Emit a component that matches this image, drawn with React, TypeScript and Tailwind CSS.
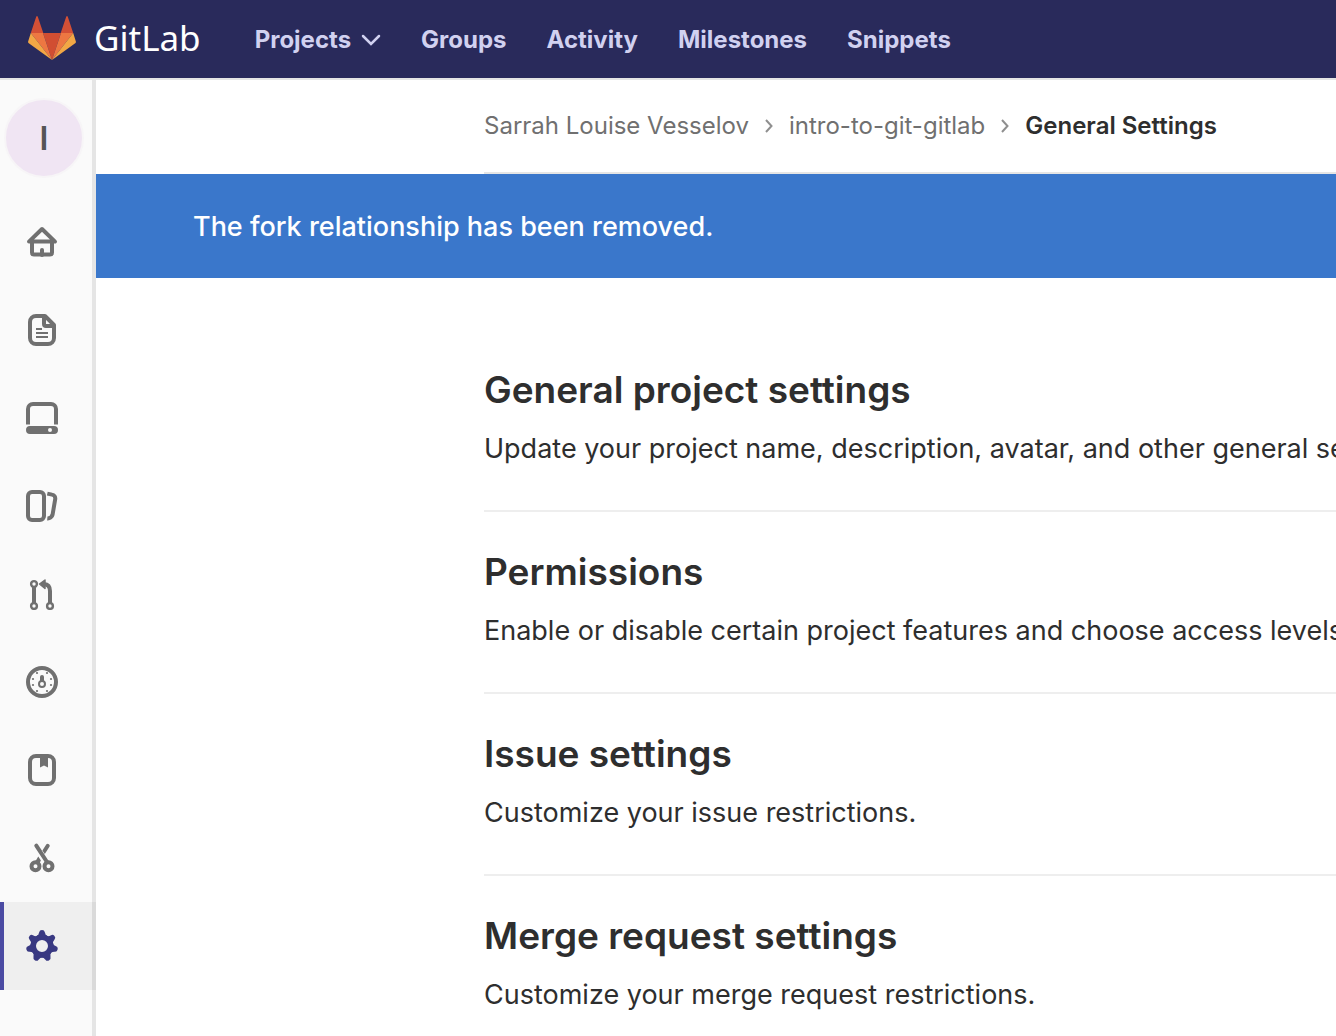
import type { ReactNode } from "react";

const navLinks = ["Groups", "Activity", "Milestones", "Snippets"];

const sections = [
  {
    title: "General project settings",
    text: "Update your project name, description, avatar, and other general settings.",
  },
  {
    title: "Permissions",
    text: "Enable or disable certain project features and choose access levels.",
  },
  { title: "Issue settings", text: "Customize your issue restrictions." },
  { title: "Merge request settings", text: "Customize your merge request restrictions." },
];

function Icon({ children }: { children: ReactNode }) {
  return (
    <svg
      viewBox="0 0 32 32"
      className="size-8"
      fill="none"
      stroke="currentColor"
      strokeWidth="4"
      strokeLinejoin="round"
      aria-hidden="true"
    >
      {children}
    </svg>
  );
}

function HomeIcon() {
  return (
    <Icon>
      <path d="M3 15.6 16 3l13 12.6z" />
      <path d="M6 16v10.500a2 2 0 0 0 2 2h16a2 2 0 0 0 2-2V16" />
      <path d="M16 24v5" strokeLinecap="round" />
    </Icon>
  );
}

function DocumentIcon() {
  return (
    <Icon>
      <path d="M10 2h9l9 9v13a6 6 0 0 1-6 6H10a6 6 0 0 1-6-6V8a6 6 0 0 1 6-6z" />
      <path d="M18 2v8a2 2 0 0 0 2 2h8" />
      <path d="M10 15h6M10 19h12M10 23h12" strokeWidth="2" />
    </Icon>
  );
}

function RepositoryIcon() {
  return (
    <Icon>
      <path d="M2 22.500V7a5 5 0 0 1 5-5h18a5 5 0 0 1 5 5v15.500" />
      <path
        d="M4 24h24a4 4 0 0 1 0 8H4a4 4 0 0 1 0-8zm20 2a2 2 0 1 0 0 4 2 2 0 0 0 0-4z"
        fill="currentColor"
        fillRule="evenodd"
        stroke="none"
      />
    </Icon>
  );
}

function IssuesIcon() {
  return (
    <Icon>
      <rect x="2" y="2" width="16" height="28" rx="4" />
      <path d="M21.300 3.600 26 4.600a4 4 0 0 1 3.200 4.600L26.600 24.500a5 5 0 0 1-5.300 4" />
    </Icon>
  );
}

function MergeIcon() {
  return (
    <Icon>
      <path d="M8 9v16M24 25V13q0-6.500-6-7" />
      <path d="M13.500 6l5.500-4v8.500z" fill="currentColor" strokeWidth="1.500" />
      <g strokeWidth="2.400" fill="#fafafa">
        <circle cx="8" cy="6" r="2.900" />
        <circle cx="8" cy="28" r="2.900" />
        <circle cx="24" cy="28" r="2.900" />
      </g>
    </Icon>
  );
}

function GaugeIcon() {
  const dots = [
    [11, 7], [21, 7], [7, 13], [25, 13], [7, 19], [25, 19], [11, 25], [21, 25],
  ];
  return (
    <Icon>
      <circle cx="16" cy="16" r="14" />
      <path d="M16 11v5" strokeLinecap="round" />
      <circle cx="16" cy="18" r="3" strokeWidth="2" fill="#fafafa" />
      {dots.map(([x, y]) => (
        <circle key={`${x}-${y}`} cx={x} cy={y} r="1.100" fill="currentColor" stroke="none" />
      ))}
    </Icon>
  );
}

function WikiIcon() {
  return (
    <Icon>
      <rect x="4" y="2" width="24" height="28" rx="6" />
      <path d="M14 3h8v10.500l-4-2-4 2z" fill="currentColor" stroke="none" />
    </Icon>
  );
}

function SnippetsIcon() {
  return (
    <Icon>
      <path d="M10.300 3.700 21 20" strokeLinecap="round" />
      <path d="M20.400 2.300a2 2 0 0 1 3.200 2.200L18.800 12l-2.400-3.600z" fill="currentColor" stroke="none" />
      <path d="M12.300 14.500l2.600 4L13 22l-4-2z" fill="currentColor" stroke="none" />
      <circle cx="9.500" cy="24.300" r="4" fill="#fafafa" />
      <circle cx="22.500" cy="24.300" r="4" fill="#fafafa" />
    </Icon>
  );
}

function SettingsIcon() {
  return (
    <Icon>
      <circle cx="16" cy="16" r="8.700" strokeWidth="5.400" />
      {[0, 1, 2, 3, 4, 5, 6].map((n) => (
        <path
          key={n}
          d="M10 6.500q2.800-1 3.200-4.300Q13.500 0 16 0t2.800 2.200Q19.200 5.500 22 6.500L16 9z"
          transform={`rotate(${(n * 360) / 7} 16 16)`}
          fill="currentColor"
          stroke="none"
        />
      ))}
    </Icon>
  );
}

const sidebarItems = [
  { label: "Overview", icon: <HomeIcon /> },
  { label: "Repository", icon: <DocumentIcon /> },
  { label: "Registry", icon: <RepositoryIcon /> },
  { label: "Issues", icon: <IssuesIcon /> },
  { label: "Merge Requests", icon: <MergeIcon /> },
  { label: "CI / CD", icon: <GaugeIcon /> },
  { label: "Wiki", icon: <WikiIcon /> },
  { label: "Snippets", icon: <SnippetsIcon /> },
];

function Tanuki() {
  return (
    <svg viewBox="0 0 48 46" className="h-[46px] w-12" aria-hidden="true">
      <path d="M2.800 17 8.200.7q.8-1.400 1.600 0L15.300 17zM32.700 17l5.500-16.300q.8-1.400 1.600 0L45.200 17z" fill="#d35036" />
      <path d="M15 17h18l-9 27z" fill="#d14e32" />
      <path d="M2.800 17H15l9 27zM45.200 17H33l-9 27z" fill="#ed7742" />
      <path d="M2.800 17 .2 25.300q-.4 1.200.6 2L24 44zM45.200 17l2.600 8.300q.4 1.200-.6 2L24 44z" fill="#f2a745" />
    </svg>
  );
}

function Separator() {
  return (
    <svg viewBox="0 0 8 14" className="mx-4 h-3.5 w-2" fill="none" stroke="#8f8f8f" strokeWidth="2" aria-hidden="true">
      <path d="M1 1l5.500 6L1 13" />
    </svg>
  );
}

export default function App() {
  return (
    <div className="flex h-screen flex-col overflow-hidden bg-white font-['Inter',sans-serif] text-[#2e2e2e]">
      <header className="flex h-20 shrink-0 items-center border-b-2 border-[#e5e5e5] bg-[#292a5b] pl-7 whitespace-nowrap">
        <a href="#home" className="flex items-center gap-[18px] text-white">
          <Tanuki />
          <span className="pb-0.5 font-['Noto_Sans',sans-serif] text-[35px] leading-10">GitLab</span>
        </a>
        <nav className="ml-[54px] flex items-center gap-10 pt-0.5 text-[24px] leading-8 font-bold text-[#d1d1f0]">
          <button type="button" className="flex items-center gap-2.5">
            Projects
            <svg viewBox="0 0 20 12" className="h-3 w-5" fill="none" stroke="currentColor" strokeWidth="2.500" strokeLinecap="round" aria-hidden="true">
              <path d="M2 2l8 8 8-8" />
            </svg>
          </button>
          {navLinks.map((label) => (
            <a key={label} href={`#${label.toLowerCase()}`}>
              {label}
            </a>
          ))}
        </nav>
      </header>

      <div className="flex min-h-0 flex-1">
        <aside className="flex w-24 shrink-0 flex-col bg-[#fafafa]">
          <div className="border-r-4 border-[#e5e5e5] pt-[18px] pb-5 pl-1">
            <a
              href="#project"
              className="flex size-20 items-center justify-center rounded-full border-2 border-[#f7f5f7] bg-[#f0e5f3] pt-0.5 text-[32px] leading-10 font-semibold text-[#555555]"
            >
              I
            </a>
          </div>
          <nav className="flex flex-1 flex-col">
            {sidebarItems.map(({ label, icon }) => (
              <a
                key={label}
                href="#section"
                aria-label={label}
                className="flex h-[88px] shrink-0 items-center border-r-4 border-[#e5e5e5] pl-[26px] text-[#707070]"
              >
                {icon}
              </a>
            ))}
            <a
              href="#settings"
              aria-label="Settings"
              aria-current="page"
              className="flex h-[88px] shrink-0 items-center border-r-4 border-l-4 border-r-[#dadada] border-l-[#4b4ba3] bg-[#efefef] pl-[22px] text-[#393982]"
            >
              <SettingsIcon />
            </a>
            <div className="flex-1 border-r-4 border-[#e5e5e5]" />
          </nav>
        </aside>

        <main className="min-w-0 flex-1 overflow-hidden whitespace-nowrap">
          <nav
            aria-label="Breadcrumb"
            className="ml-[388px] flex h-[94px] items-center border-b-2 border-[#e5e5e5] text-[24px] leading-8 text-[#707070]"
          >
            <a href="#owner">Sarrah Louise Vesselov</a>
            <Separator />
            <a href="#repo">intro-to-git-gitlab</a>
            <Separator />
            <h2 className="font-semibold text-[#2e2e2e]">General Settings</h2>
          </nav>

          <div role="status" className="flex h-[104px] items-center bg-[#3a77cb] pt-0.5 pl-[97px] text-[27px] leading-10 font-medium text-white">
            The fork relationship has been removed.
          </div>

          <div className="ml-[388px] pt-[52px]">
            {sections.map(({ title, text }) => (
              <section key={title} className="border-b-2 border-[#eeeeee] pt-9 pb-[41px]">
                <h4 className="text-[37px] leading-[47px] font-semibold">{title}</h4>
                <p className="mt-4 text-[27px] leading-10">{text}</p>
              </section>
            ))}
          </div>
        </main>
      </div>
    </div>
  );
}
